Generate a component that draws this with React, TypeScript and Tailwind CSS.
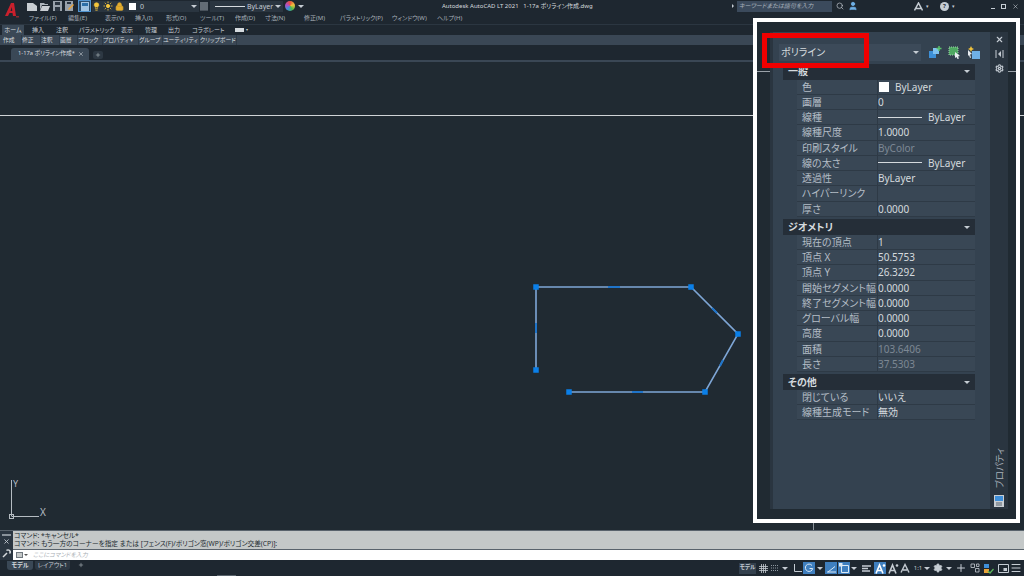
import { Lightbulb, Lock, Search, Settings, Sun, User, X, Plus, Menu } from 'lucide-react'

const menuItems = [
  { label: 'ファイル(F)', width: 'w-[39px]' },
  { label: '編集(E)', width: 'w-[37px]' },
  { label: '表示(V)', width: 'w-[30px]' },
  { label: '挿入(I)', width: 'w-[31px]' },
  { label: '形式(O)', width: 'w-[34px]' },
  { label: 'ツール(T)', width: 'w-[35px]' },
  { label: '作成(D)', width: 'w-[30px]' },
  { label: '寸法(N)', width: 'w-[39px]' },
  { label: '修正(M)', width: 'w-[36px]' },
  { label: 'パラメトリック(P)', width: 'w-[52px]' },
  { label: 'ウィンドウ(W)', width: 'w-[45px]' },
  { label: 'ヘルプ(H)', width: 'w-[30px]' },
]
const ribbonTabs = [
  { label: '挿入', width: 'w-[24px]' },
  { label: '注釈', width: 'w-[23px]' },
  { label: 'パラメトリック', width: 'w-[42px]' },
  { label: '表示', width: 'w-[24px]' },
  { label: '管理', width: 'w-[23px]' },
  { label: '出力', width: 'w-[24px]' },
  { label: 'コラボレート', width: 'w-[43px]' },
]
const ribbonPanels = [
  { label: '作成', width: 'w-[19px]' },
  { label: '修正', width: 'w-[19px]' },
  { label: '注釈', width: 'w-[19px]' },
  { label: '画層', width: 'w-[18px]' },
  { label: 'ブロック', width: 'w-[25px]' },
  { label: 'プロパティ ▾', width: 'w-[36px]' },
  { label: 'グループ', width: 'w-[24px]' },
  { label: 'ユーティリティ', width: 'w-[37px]' },
  { label: 'クリップボード', width: 'w-[37px]' },
]

const Arrow = () => <span className="inline-block h-0 w-0 border-x-[3px] border-t-[3px] border-x-transparent border-t-[#c5ccd3]" />

const LineSample = ({ width }: { width: string }) => <span className={`inline-block h-px bg-[#d5dade] ${width}`} />

function Row({ label, value, dim, swatch, line }: { label: string; value?: string; dim?: boolean; swatch?: boolean; line?: boolean }) {
  return (
    <div className="grid h-[15.25px] grid-cols-[81px_97px] border-b border-[#2e3a46] bg-[#394755] text-[10px] leading-[14px]">
      <div className="truncate border-r border-[#2e3a46] pl-[5px] text-[#b4bdc6]">{label}</div>
      <div className={`flex items-center gap-[5px] ${dim ? 'text-[#7d8894]' : 'text-[#d5dade]'}`}>
        {swatch && <span className="ml-[1px] mr-[1px] h-[10px] w-[10px] bg-white" />}
        {line && <LineSample width="w-[44px]" />}
        <span className={line ? 'ml-[1px]' : ''}>{value}</span>
      </div>
    </div>
  )
}

function Section({ title, gap, children }: { title: string; gap: string; children: React.ReactNode }) {
  return (
    <div className={gap}>
      <div className="flex h-[15.5px] items-center justify-between bg-[#252e38] pl-[5px] pr-[5px] text-[10px] font-semibold text-[#d5dade]">
        <span>{title}</span>
        <Arrow />
      </div>
      <div className="ml-[14px]">{children}</div>
    </div>
  )
}

function StatusBtn({ on, children }: { on?: boolean; children: React.ReactNode }) {
  return <span className={`flex h-[12px] w-[12px] shrink-0 items-center justify-center ${on ? 'bg-[#3f7fbf]' : ''}`}>{children}</span>
}

const AnnoIcon = ({ color }: { color: string }) => (
  <svg width="11" height="11" viewBox="0 0 11 11"><path d="M1 10.500L4.500 2l3.500 8.500M2.500 7.500h4" stroke={color} strokeWidth="1.600" fill="none" /><circle cx="9" cy="2.500" r="1.300" fill={color} /></svg>
)

export default function App() {
  return (
    <div className="relative flex h-[576px] w-[1024px] flex-col overflow-hidden bg-[#202a32] font-['Noto_Sans','Noto_Sans_CJK_JP',sans-serif] text-[#c5ccd3] [font-feature-settings:'palt']">
      {/* title bar */}
      <div className="flex h-[12px] shrink-0 items-center bg-[#1e2730] pl-[27px]">
        <div className="flex items-center gap-[3px]">
          <svg width="10" height="9" viewBox="0 0 10 9"><path d="M0 1h6l4 3v5H0z" fill="#c9ced3" /></svg>
          <svg width="10" height="9" viewBox="0 0 10 9"><path d="M0 1h4l1 1h3v1H2L0 8z" fill="#aeb5bc" /><path d="M2 4h8L8 9H0z" fill="#c9ced3" /></svg>
          <svg width="9" height="10" viewBox="0 0 9 10"><path d="M0 0h9v10H0z" fill="#98a1aa" /><path d="M2 1h5v3H2zM2 6h5v4H2z" fill="#2b3540" /></svg>
          <svg width="9" height="10" viewBox="0 0 9 10"><path d="M0 0h8v10H0z" fill="#98a1aa" /><path d="M2 1h4v2H2z" fill="#2b3540" /><path d="M3 8l5-5 1 1-5 5z" fill="#e8a33a" /></svg>
          <span className="ml-[1px] flex h-[12px] w-[13px] items-center justify-center border border-[#4f93cf] bg-[#2d4f6e]">
            <svg width="8" height="9" viewBox="0 0 8 9"><path d="M0 0h8v9H0z" fill="#9fc3e2" /><path d="M1 1h6v3H1z" fill="#2c6fa8" /></svg>
          </span>
        </div>
        <div className="ml-[1px] flex h-[11px] w-[107px] items-center gap-[2px] bg-[#2a3540] pr-[2px]">
          <Lightbulb size={9} className="fill-[#f3c53c] text-[#f3c53c]" />
          <Sun size={10} className="fill-[#f3c53c] text-[#f3c53c]" />
          <Lock size={9} className="fill-[#e4ad2e] text-[#e4ad2e]" />
          <span className="ml-[3px] h-[7px] w-[7px] bg-white" />
          <span className="ml-[2px] flex-1 text-[7px] leading-none">0</span>
          <Arrow />
        </div>
        <svg className="mx-[1px]" width="8" height="9" viewBox="0 0 8 9"><path d="M0 1h8M0 3h8M0 5h8M0 7h8M1 0v9M3 0v9M5 0v9M7 0v9" stroke="#98a1aa" strokeWidth=".7" /></svg>
        <div className="ml-[1px] flex h-[11px] w-[73px] items-center bg-[#2a3540] pl-[5px] pr-[2px] text-[7px] leading-none">
          <LineSample width="w-[30px]" />
          <span className="ml-[2px] flex-1">ByLayer</span>
          <Arrow />
        </div>
        <span className="ml-[2px] h-[10px] w-[10px] rounded-full bg-[conic-gradient(#e94f3d,#f0c23b,#4cb84c,#3b8fd9,#b14fc4,#e94f3d)]" />
        <span className="ml-[3px] flex"><Arrow /></span>
        <div className="ml-[138px] w-[151px] whitespace-nowrap text-[6px] leading-none text-[#d5dade]">Autodesk AutoCAD LT 2021&nbsp;&nbsp;&nbsp;1-17a ポリライン作成.dwg</div>
        <span className="ml-[139px] mr-[3px] flex"><span className="h-0 w-0 border-y-[2px] border-l-[2px] border-y-transparent border-l-[#c5ccd3]" /></span>
        <div className="flex h-[11px] w-[95px] items-center bg-[#3b4a5c] pl-[2px] text-[6px] italic leading-none text-[#aab3bc]">キーワードまたは語句を入力</div>
        <Search size={8} className="ml-[4px]" />
        <User size={10} className="ml-[4px] fill-[#6fb0e6] text-[#6fb0e6]" />
        <svg className="ml-[56px]" width="9" height="9" viewBox="0 0 9 9"><path d="M0.500 8.500L4.500 1l4 7.500M2 6.500h5" stroke="#c5ccd3" strokeWidth="1.500" fill="none" /></svg>
        <span className="ml-[3px] text-[5px] leading-none">▾</span>
        <span className="ml-[11px] flex h-[9px] w-[9px] items-center justify-center rounded-full bg-[#c5ccd3] text-[6px] font-bold leading-none text-[#1e2730]">?</span>
        <span className="ml-[3px] text-[5px] leading-none">▾</span>
        <div className="ml-auto flex items-center gap-[6px] pr-[5px]">
          <span className="mt-[4px] h-px w-[4px] bg-[#c5ccd3]" />
          <span className="h-[5px] w-[5px] border border-[#c5ccd3]" />
          <X size={7} />
        </div>
      </div>

      {/* menu bar */}
      <div className="flex h-[12px] shrink-0 items-center bg-[#1e2730] pl-[29px] text-[6px] leading-none text-[#a7b0b9]">
        {menuItems.map((m) => <span key={m.label} className={`whitespace-nowrap ${m.width}`}>{m.label}</span>)}
      </div>

      {/* ribbon tabs */}
      <div className="flex h-[11px] shrink-0 items-center border-t border-[#2b3641] bg-[#1e2730] pl-[2px] text-[6px] leading-none">
        <span className="mr-[8px] flex h-[10px] w-[22px] items-center justify-center bg-[#3a4856] text-[#d5dade]">ホーム</span>
        {ribbonTabs.map((t) => <span key={t.label} className={`whitespace-nowrap ${t.width}`}>{t.label}</span>)}
        <span className="flex items-center gap-[2px]"><span className="h-[4px] w-[9px] bg-[#d5dade]" /><span className="text-[4px]">▾</span></span>
      </div>

      {/* ribbon panels */}
      <div className="flex h-[10px] shrink-0 items-center bg-[#3a4755] pl-[3px] text-[5.800px] leading-[10px] text-[#d5dade]">
        {ribbonPanels.map((p) => <span key={p.label} className={`whitespace-nowrap border-r border-[#2e3a46] ${p.width}`}>{p.label}</span>)}
      </div>

      {/* file tabs */}
      <div className="flex h-[15px] shrink-0 items-end bg-[#1e2730] pl-[11px]">
        <div className="flex h-[12px] w-[78px] items-center justify-between rounded-tl-[3px] rounded-tr-[3px] bg-[#3a4856] pl-[7px] pr-[5px] text-[5.800px] leading-none text-[#d5dade]">
          <span className="whitespace-nowrap">1-17a ポリライン作成*</span>
          <X size={6} />
        </div>
        <span className="mb-[1px] ml-[4px] flex h-[8px] w-[10px] items-center justify-center rounded-[2px] bg-[#2d3843]"><Plus size={6} /></span>
      </div>
      <div className="h-[2px] shrink-0 bg-[#3a4755]" />

      {/* drawing area */}
      <div className="relative flex-1">
        <svg className="absolute inset-0 h-full w-full" viewBox="0 62 1024 468">
          <path d="M0 115.500H1024" stroke="#cfd3d6" strokeWidth="1" />
          <path d="M11.500 516V480M11.500 516.500H39" stroke="#b5bcc2" strokeWidth="1" fill="none" />
          <rect x="9.500" y="514.500" width="4" height="4" fill="none" stroke="#b5bcc2" />
          <text x="13" y="487" fontSize="9" fill="#b5bcc2">Y</text>
          <text x="40" y="516" fontSize="10" fill="#b5bcc2">X</text>
          <path d="M536 370V287H691L738 334L705 392H569" fill="none" stroke="#7ea6d6" strokeWidth="1.600" />
          <path d="M536 323V333M608 287H620M632 392H643M712 308L717 313M720 366L723 360" stroke="#1f74c9" strokeWidth="2" />
          {[[536, 287], [691, 287], [738, 334], [705, 392], [569, 392], [536, 370]].map(([x, y]) => (
            <rect key={`${x}-${y}`} x={x - 2.750} y={y - 2.750} width="5.500" height="5.500" fill="#0a7fe8" />
          ))}
        </svg>
      </div>

      {/* command line */}
      <div className="flex h-[30px] shrink-0 border-t border-[#59636c]">
        <div className="flex w-[13px] shrink-0 flex-col items-center bg-[#2b3641] pt-[3px]">
          <span className="h-[2px] w-[9px] border-y border-[#8a939b]" />
          <X size={7} strokeWidth={3} className="mt-[2px]" />
          <svg className="mt-[4px]" width="9" height="9" viewBox="0 0 9 9"><path d="M1 8l4-4M4.500 1.500a2 2 0 1 1 3 3" stroke="#d5dade" strokeWidth="1.500" fill="none" /></svg>
        </div>
        <div className="flex flex-1 flex-col">
          <div className="h-[18px] whitespace-nowrap bg-[#c4c8c8] pl-[1px] pt-[1px] text-[6.700px] leading-[8px] text-[#222a30]">
            <div>コマンド: *キャンセル*</div>
            <div>コマンド: もう一方のコーナーを指定 または [フェンス(F)/ポリゴン窓(WP)/ポリゴン交差(CP)]:</div>
          </div>
          <div className="flex h-[11px] items-center border-t border-[#59636c] bg-white pl-[3px] text-[6px] italic leading-none text-[#aab0b5]">
            <span className="mr-[1px] h-[6px] w-[7px] border border-[#70787f] bg-[#c4c8c8]" />
            <span className="mr-[5px] h-0 w-0 border-x-[2px] border-t-[2px] border-x-transparent border-t-[#555]" />
            ここにコマンドを入力
          </div>
        </div>
      </div>

      {/* status bar */}
      <div className="flex h-[16px] shrink-0 items-center bg-[#1e2730] text-[6px] leading-none">
        <span className="mb-[6px] ml-[7px] flex h-[9px] w-[26px] items-center justify-center rounded-b-[3px] bg-[#3a4856] font-semibold text-[#d5dade]">モデル</span>
        <span className="mb-[6px] ml-[2px] flex h-[9px] w-[35px] items-center justify-center whitespace-nowrap rounded-b-[3px] bg-[#2d3843]">レイアウト1</span>
        <span className="mb-[6px] ml-[8px]"><Plus size={6} /></span>
        <div className="ml-auto flex items-center pr-[2px] text-[#c5ccd3]">
          <span className="mr-[1px] flex h-[11px] w-[17px] items-center justify-center bg-[#33404d] text-[5.500px] font-bold">モデル</span>
          <StatusBtn><svg width="9" height="9" viewBox="0 0 9 9"><path d="M0 2.500h9M0 4.500h9M0 6.500h9M2.500 0v9M4.500 0v9M6.500 0v9" stroke="#c5ccd3" strokeWidth=".8" /></svg></StatusBtn>
          <StatusBtn><svg width="8" height="8" viewBox="0 0 8 8"><path d="M0 1.500h8M0 4h8M0 6.500h8" stroke="#8f99a2" strokeWidth="1" strokeDasharray="1 1" /></svg></StatusBtn>
          <span className="ml-[1px] flex w-[6px]"><Arrow /></span>
          <span className="ml-[3px]"><StatusBtn><svg width="9" height="9" viewBox="0 0 9 9"><path d="M1.500 0v7.500H9" stroke="#c5ccd3" fill="none" /></svg></StatusBtn></span>
          <StatusBtn on><svg width="10" height="10" viewBox="0 0 10 10"><path d="M8 2.500a3.700 3.700 0 1 0 .7 3H5.500" stroke="#dbe9f5" fill="none" /></svg></StatusBtn>
          <span className="ml-[2px] flex w-[6px]"><Arrow /></span>
          <span className="ml-[2px]"><StatusBtn on><svg width="9" height="9" viewBox="0 0 9 9"><path d="M0 8h9M1 8l7-5.500" stroke="#dbe9f5" fill="none" /></svg></StatusBtn></span>
          <span className="ml-[1px]"><StatusBtn on><svg width="10" height="10" viewBox="0 0 10 10"><path d="M2.500 2.500h7v7h-7z" stroke="#dbe9f5" fill="none" /><path d="M0 0h3.500v3.500H0z" fill="#dbe9f5" /></svg></StatusBtn></span>
          <span className="ml-[1px] flex w-[6px]"><Arrow /></span>
          <span className="ml-[3px]"><StatusBtn><svg width="9" height="7" viewBox="0 0 9 7"><path d="M0 1h9M0 3.500h6M0 6h8" stroke="#c5ccd3" strokeWidth="1.300" /></svg></StatusBtn></span>
          <span className="ml-[2px]"><StatusBtn on><AnnoIcon color="#ffffff" /></StatusBtn></span>
          <span className="ml-[1px]"><StatusBtn><AnnoIcon color="#c5ccd3" /></StatusBtn></span>
          <StatusBtn><svg width="10" height="10" viewBox="0 0 10 10"><path d="M1 9.500L5 1.500l4 8M3 7h4" stroke="#c5ccd3" strokeWidth="1.400" fill="none" /></svg></StatusBtn>
          <span className="ml-[1px] w-[12px] text-center text-[6px]">1:1</span>
          <span className="flex w-[6px]"><Arrow /></span>
          <span className="ml-[3px]"><Settings size={10} className="fill-[#c5ccd3]" /></span>
          <span className="ml-[3px] flex w-[6px]"><Arrow /></span>
          <span className="ml-[3px]"><Plus size={12} /></span>
          <span className="ml-[2px]"><StatusBtn><svg width="10" height="10" viewBox="0 0 10 10"><path d="M1 1h3.500v3.500H1zM5.500 5.500H9V9H5.500zM6.500 1h2.500v2.500H6.500z" stroke="#c5ccd3" fill="none" strokeWidth=".8" /></svg></StatusBtn></span>
          <span className="ml-[1px]"><StatusBtn><svg width="11" height="11" viewBox="0 0 11 11"><path d="M1 1h5v4H1z" fill="#3f8fd9" /><path d="M1 6h5v4H1z" fill="#e8a33a" /><path d="M5 8l2 2 3.500-4" stroke="#5cb85c" strokeWidth="1.200" fill="none" /></svg></StatusBtn></span>
          <span className="ml-[3px]"><StatusBtn><svg width="11" height="9" viewBox="0 0 11 9"><path d="M.5.500h10v8H.5z" stroke="#c5ccd3" fill="none" /><path d="M5.500 4H9v3H5.500z" fill="#c5ccd3" /></svg></StatusBtn></span>
          <span className="ml-[1px]"><Menu size={12} /></span>
        </div>
      </div>

      {/* app logo */}
      <div className="absolute left-[5px] top-[3px]">
        <svg width="14" height="15" viewBox="0 0 14 15">
          <path d="M0 13L6 0h3l2 13H8l-.5-3H4.500L3 13zM5.500 8h1.800l-.5-4z" fill="#c9202c" />
          <path d="M11 13h3v1.500h-3z" fill="#8a2a30" />
        </svg>
      </div>

      <span className="absolute bottom-0 left-[217px] h-px w-[19px] bg-[#59636c]" />
      <span className="absolute left-[813px] top-[522px] h-[8px] w-px bg-[#8a939b]" />

      {/* annotated properties palette */}
      <div className="absolute left-[753px] top-[18px] flex h-[505px] w-[267px] border-4 border-white bg-[#202a32] pb-[10px] pl-[13px] pr-[8px] pt-[10px]">
        <span className="absolute left-0 top-[49px] h-px w-[13px] bg-[#9aa2a9]" />
        <span className="absolute right-0 top-[49px] h-px w-[8px] bg-[#9aa2a9]" />
        <div className="flex flex-1 bg-[#2a3540]">
          <div className="ml-[3px] flex-1 bg-[#344250] pl-[6px] pt-[12px]">
            <div className="flex h-[17px] items-center gap-[8px]">
              <div className="flex h-[17px] w-[142px] shrink-0 items-center justify-between bg-[#3c4a59] pl-[2px] pr-[2px] text-[10px] text-[#d5dade]">
                <span>ポリライン</span>
                <Arrow />
              </div>
              <svg className="shrink-0" width="13" height="13" viewBox="0 0 13 13"><path d="M0 5h7v7H0z" fill="#3d8fd6" /><path d="M4 2h6v6H4z" fill="#7fc0ee" /><path d="M10 0v5M7.500 2.500h5" stroke="#59c26a" strokeWidth="1.500" /></svg>
              <svg className="ml-[-2px] shrink-0" width="13" height="13" viewBox="0 0 13 13"><path d="M1 1h9v8H1z" fill="#4ea862" stroke="#9fd0ab" strokeDasharray="1 1" /><path d="M7 6l5 4-2 .5 1 2-1.500.5-1-2L7 12z" fill="#e8edf1" /></svg>
              <svg className="ml-[-2px] shrink-0" width="13" height="13" viewBox="0 0 13 13"><path d="M5 5h8v8H5z" fill="#6fb0e6" /><path d="M1 4l4 4-2 .5 1 3-1 .5-1-3-1 1z" fill="#e8edf1" /><path d="M4 0l1 2 2 1-2 1-1 2-1-2-2-1 2-1z" fill="#f0c23b" /></svg>
            </div>
            <div className="ml-[4px] mt-[3px] w-[192px]">
              <Section title="一般" gap="mb-[2.500px]">
                <Row label="色" value="ByLayer" swatch />
                <Row label="画層" value="0" />
                <Row label="線種" value="ByLayer" line />
                <Row label="線種尺度" value="1.0000" />
                <Row label="印刷スタイル" value="ByColor" dim />
                <Row label="線の太さ" value="ByLayer" line />
                <Row label="透過性" value="ByLayer" />
                <Row label="ハイパーリンク" />
                <Row label="厚さ" value="0.0000" />
              </Section>
              <Section title="ジオメトリ" gap="mb-[2.250px]">
                <Row label="現在の頂点" value="1" />
                <Row label="頂点 X" value="50.5753" />
                <Row label="頂点 Y" value="26.3292" />
                <Row label="開始セグメント幅" value="0.0000" />
                <Row label="終了セグメント幅" value="0.0000" />
                <Row label="グローバル幅" value="0.0000" />
                <Row label="高度" value="0.0000" />
                <Row label="面積" value="103.6406" dim />
                <Row label="長さ" value="37.5303" dim />
              </Section>
              <Section title="その他" gap="mb-0">
                <Row label="閉じている" value="いいえ" />
                <Row label="線種生成モード" value="無効" />
              </Section>
            </div>
          </div>
          <div className="flex w-[18px] shrink-0 flex-col items-center pt-[3px] text-[#c5ccd3]">
            <X size={9} strokeWidth={3} />
            <svg className="mt-[6px]" width="9" height="8" viewBox="0 0 9 8"><path d="M1 0v8M8 0v8" stroke="#c5ccd3" /><path d="M3 4l3-3v6z" fill="#c5ccd3" /></svg>
            <Settings size={9} className="mt-[6px]" strokeWidth={3} />
            <div className="mt-auto rotate-180 text-[9px] leading-none text-[#aab3bc] [text-orientation:sideways] [writing-mode:vertical-rl]">プロパティ</div>
            <svg className="mb-[2px] mt-[7px]" width="10" height="12" viewBox="0 0 10 12"><path d="M0 0h10v12H0z" fill="#c9ced3" /><path d="M1 1h8v5H1z" fill="#3f8fd9" /><path d="M2 8h6M2 10h6" stroke="#5a646e" /></svg>
          </div>
        </div>
      </div>

      {/* red highlight over the type selector */}
      <div className="absolute left-[762px] top-[33px] h-[35px] w-[107px] border-[5px] border-[#f00000]" />
    </div>
  )
}
